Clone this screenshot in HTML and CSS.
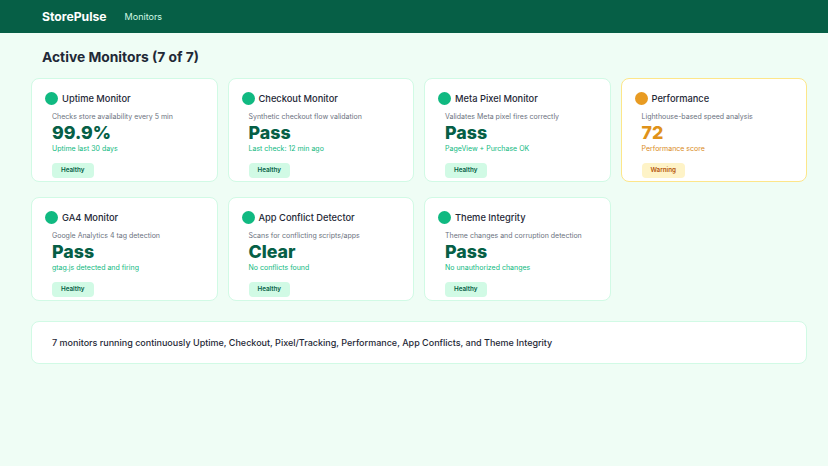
FILE: index.html
```html
<!DOCTYPE html>
<html lang="en">
<head>
  <meta charset="UTF-8">
  <meta name="viewport" content="width=device-width, initial-scale=1.0">
  <title>StorePulse - Monitors</title>
  <link rel="stylesheet" href="styles.css">
</head>
<body class="sp-body">

<header class="sp-header">
  <div class="sp-logo">StorePulse</div>
  <nav class="sp-nav">Monitors</nav>
</header>

<main class="sp-main">
  <h1 class="sp-title">Active Monitors (7 of 7)</h1>

  <div class="sp-grid">
    <div class="sp-card">
      <div class="sp-card-head"><span class="sp-dot"></span><span class="sp-card-name">Uptime Monitor</span></div>
      <div class="sp-card-body">
        <p class="sp-desc">Checks store availability every 5 min</p>
        <p class="sp-value">99.9%</p>
        <p class="sp-sub">Uptime last 30 days</p>
        <span class="sp-badge">Healthy</span>
      </div>
    </div>

    <div class="sp-card">
      <div class="sp-card-head"><span class="sp-dot"></span><span class="sp-card-name">Checkout Monitor</span></div>
      <div class="sp-card-body">
        <p class="sp-desc">Synthetic checkout flow validation</p>
        <p class="sp-value">Pass</p>
        <p class="sp-sub">Last check: 12 min ago</p>
        <span class="sp-badge">Healthy</span>
      </div>
    </div>

    <div class="sp-card">
      <div class="sp-card-head"><span class="sp-dot"></span><span class="sp-card-name">Meta Pixel Monitor</span></div>
      <div class="sp-card-body">
        <p class="sp-desc">Validates Meta pixel fires correctly</p>
        <p class="sp-value">Pass</p>
        <p class="sp-sub">PageView + Purchase OK</p>
        <span class="sp-badge">Healthy</span>
      </div>
    </div>

    <div class="sp-card sp-card-warn">
      <div class="sp-card-head"><span class="sp-dot"></span><span class="sp-card-name">Performance</span></div>
      <div class="sp-card-body">
        <p class="sp-desc">Lighthouse-based speed analysis</p>
        <p class="sp-value">72</p>
        <p class="sp-sub">Performance score</p>
        <span class="sp-badge">Warning</span>
      </div>
    </div>

    <div class="sp-card">
      <div class="sp-card-head"><span class="sp-dot"></span><span class="sp-card-name">GA4 Monitor</span></div>
      <div class="sp-card-body">
        <p class="sp-desc">Google Analytics 4 tag detection</p>
        <p class="sp-value">Pass</p>
        <p class="sp-sub">gtag.js detected and firing</p>
        <span class="sp-badge">Healthy</span>
      </div>
    </div>

    <div class="sp-card">
      <div class="sp-card-head"><span class="sp-dot"></span><span class="sp-card-name">App Conflict Detector</span></div>
      <div class="sp-card-body">
        <p class="sp-desc">Scans for conflicting scripts/apps</p>
        <p class="sp-value">Clear</p>
        <p class="sp-sub">No conflicts found</p>
        <span class="sp-badge">Healthy</span>
      </div>
    </div>

    <div class="sp-card">
      <div class="sp-card-head"><span class="sp-dot"></span><span class="sp-card-name">Theme Integrity</span></div>
      <div class="sp-card-body">
        <p class="sp-desc">Theme changes and corruption detection</p>
        <p class="sp-value">Pass</p>
        <p class="sp-sub">No unauthorized changes</p>
        <span class="sp-badge">Healthy</span>
      </div>
    </div>
  </div>

  <div class="sp-summary">
    7 monitors running continuously Uptime, Checkout, Pixel/Tracking, Performance, App Conflicts, and Theme Integrity
  </div>
</main>

</body>
</html>
```

FILE: styles.css
```css
/* base */
.sp-body {
  margin: 0;
  padding: 0;
  font-family: "Inter", "Noto Sans", sans-serif;
  background: #effdf5;
  color: #1f2937;
}

.sp-body p {
  margin: 0;
}

/* header */
.sp-header {
  display: flex;
  align-items: center;
  height: 33px;
  padding: 0 42px;
  gap: 18px;
  background-color: #065f46;
}

.sp-logo {
  font-size: 12.2px;
  font-weight: 700;
  color: #fff;
}

.sp-nav {
  font-size: 9px;
  color: #d1fae5;
}

/* main */
.sp-main {
  padding: 15px 21px 0 31px;
}

.sp-title {
  margin: 0 0 12px 11px;
  font-size: 13.8px;
  font-weight: 700;
  line-height: 18px;
  color: #1f2937;
}

.sp-grid {
  display: grid;
  grid-template-columns: repeat(4, 1fr);
  column-gap: 10px;
  row-gap: 15px;
}

/* card */
.sp-card {
  background: #fff;
  border: 1px solid #d1fae5;
  border-radius: 8px;
  padding: 13px 13px 3px;
}

.sp-card-head {
  display: flex;
  align-items: center;
  gap: 4px;
  height: 13px;
}

.sp-dot {
  width: 13px;
  height: 13px;
  border-radius: 50%;
  background: #10b981;
  flex-shrink: 0;
}

.sp-card-name {
  font-size: 9.3px;
  font-weight: 500;
  color: #1f2937;
}

.sp-card-body {
  padding-left: 7px;
  padding-top: 6px;
}

.sp-desc {
  font-size: 7px;
  line-height: 12px;
  color: #6b7280;
}

.sp-value {
  font-size: 17.8px;
  font-weight: 800;
  line-height: 20px;
  margin-top: 3px;
  color: #065f46;
}

.sp-sub {
  font-size: 7px;
  line-height: 12px;
  margin-top: 1px;
  color: #10b981;
}

.sp-badge {
  display: inline-block;
  margin-top: 8px;
  padding: 3px 9px;
  border-radius: 4px;
  background: #d1fae5;
  color: #065f46;
  font-size: 6.3px;
  font-weight: 600;
  line-height: 9px;
}

/* warning state */
.sp-card-warn {
  border-color: #fde68a;
}

.sp-card-warn .sp-dot {
  background: #e89b22;
}

.sp-card-warn .sp-value {
  color: #e0921a;
}

.sp-card-warn .sp-sub {
  color: #d98a1a;
}

.sp-card-warn .sp-badge {
  background: #fef3c7;
  color: #b45309;
}

/* summary */
.sp-summary {
  margin-top: 20px;
  background: #fff;
  border: 1px solid #d1fae5;
  border-radius: 8px;
  padding: 14px 20px;
  font-size: 9px;
  font-weight: 500;
  line-height: 13px;
  color: #1f2937;
}
```
